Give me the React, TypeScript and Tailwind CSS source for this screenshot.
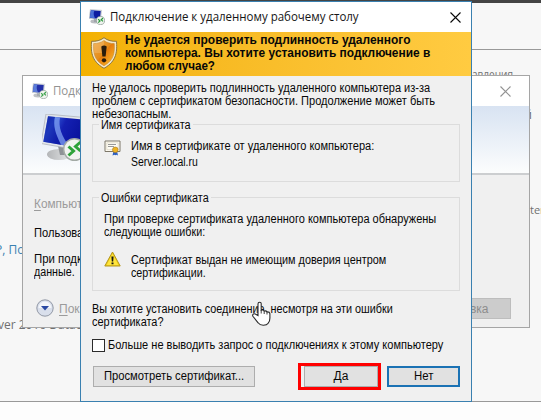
import { useLayoutEffect, useRef, useState } from "react";
import clsx from "clsx";

/** One line of text, condensed or widened so that it spans `width` pixels. */
function Line({ text, width, className }: { text: string; width: number; className?: string }) {
  const ref = useRef<HTMLSpanElement>(null);
  const [scale, setScale] = useState(1);
  useLayoutEffect(() => {
    const el = ref.current;
    if (el) setScale(width / el.offsetWidth);
  }, [text, width]);
  return (
    <div className={clsx("whitespace-nowrap", className)} style={{ width: `${width}px` }}>
      <span ref={ref} className="block w-max origin-left" style={{ transform: `scaleX(${scale})` }}>{text}</span>
    </div>
  );
}

function ComputerIcon({ className }: { className: string }) {
  return (
    <svg className={className} viewBox="0 0 16 16">
      <ellipse cx="6" cy="12.500" rx="4.600" ry="1.900" fill="#b9bcc0" />
      <path d="M5 10h4l1 3H5z" fill="#a0a5aa" />
      <path d="M1.300.5 12.600 1.200 11.600 10.900 0 9.400z" fill="#c9d0d8" stroke="#a5abb5" strokeWidth=".4" />
      <path d="M1.900 1.200 11.700 1.900l-.8 8L.8 8.700z" fill="#0d1ba0" />
      <path d="M1.900 1.200 5.500 1.500C4 4 4.800 6.500 6 9.200L.8 8.700z" fill="#4a6fd6" />
      <circle cx="11.500" cy="11.500" r="4.100" fill="#f0f3ef" stroke="#86978f" strokeWidth=".7" />
      <path d="m9.200 10.200 1.800 1.700-1.800 1.700M14 9l-1.800 1.700 1.800 1.700" fill="none" stroke="#2a9a3b" strokeWidth="1.200" />
    </svg>
  );
}

function LargeComputer() {
  return (
    <svg className="block h-[56px] w-[60px]" viewBox="0 0 60 56">
      <defs>
        <linearGradient id="screen" x1="0" y1="0" x2="1" y2=".35">
          <stop offset="0" stopColor="#1330b8" />
          <stop offset=".25" stopColor="#3157d6" />
          <stop offset=".5" stopColor="#1420b2" />
          <stop offset="1" stopColor="#08109a" />
        </linearGradient>
        <linearGradient id="stand" x1="0" y1="0" x2="1" y2="0">
          <stop offset="0" stopColor="#b4b6b8" />
          <stop offset="1" stopColor="#e4e6e7" />
        </linearGradient>
      </defs>
      <ellipse cx="17" cy="40.500" rx="12" ry="5.500" fill="url(#stand)" />
      <path d="M16 32h14l1 9H18z" fill="#8e9296" />
      <path d="M4 0 48 4 42 37 -1 29.500z" fill="#e2e6eb" stroke="#a9adb5" strokeWidth=".7" />
      <path d="M6 2.300 46 6 40.500 34.500 1.300 27.700z" fill="url(#screen)" />
      <path d="M6 2.300 13 3C11 11 13 19 19 30.800L1.300 27.700z" fill="#0c1da4" opacity=".55" />
      <path d="M13 3 18 3.400C16 13 20 22 27 32.200L19 30.800C13 19 11 11 13 3z" fill="#7fa0f0" opacity=".75" />
      <circle cx="32.500" cy="35.500" r="10.800" fill="#f1f3f0" stroke="#a3aaa5" strokeWidth="1.400" />
      <path d="m26.500 32.500 5 4.500-5 4.500M38.500 28l-5 4.500 5 4.500" fill="none" stroke="#2da339" strokeWidth="3" />
    </svg>
  );
}

function Shield() {
  return (
    <svg className="block h-[32px] w-[28px]" viewBox="0 0 28 32">
      <defs>
        <linearGradient id="shield" x1="0" y1="0" x2="1" y2="1">
          <stop offset="0" stopColor="#f0a94a" />
          <stop offset=".49" stopColor="#e58b16" />
          <stop offset=".5" stopColor="#e67b0d" />
          <stop offset="1" stopColor="#ffc52d" />
        </linearGradient>
      </defs>
      <path d="M14 .7C10.500 3.500 6 4.500 1.500 4.300 1 13 .5 24 14 31.300 27.500 24 27 13 26.500 4.300 22 4.500 17.500 3.500 14 .7z" fill="#f3e8ca" stroke="#8b7440" strokeWidth="1" />
      <path d="M14 3.500C11 5.700 7.500 6.600 3.700 6.600 3.300 15 3.500 23 14 28.800 24.500 23 24.700 15 24.300 6.600 20.500 6.600 17 5.700 14 3.500z" fill="url(#shield)" stroke="#bd7c1d" strokeWidth=".5" />
      <path d="M14 3.500C11 5.700 7.500 6.600 3.700 6.600L3.500 16H14z" fill="#f5c680" opacity=".35" />
      <path d="M11.300 9.500q2.700-2 5.400 0L15.600 19.500h-3.200z" fill="#291c0c" />
      <ellipse cx="14" cy="23.300" rx="2.200" ry="2.100" fill="#291c0c" />
    </svg>
  );
}

function Certificate() {
  return (
    <svg className="block h-[16px] w-[17px]" viewBox="0 0 17 16">
      <path d="M1 1h15v10.500H1z" fill="#fffdf4" stroke="#7d7769" />
      <path d="M2.800 2.800h11.400v6.900H2.800z" fill="none" stroke="#d3cbb9" strokeWidth=".6" />
      <path d="M4 4.500h8M4 6.500h6" stroke="#8d8d8d" strokeWidth=".9" />
      <path d="m9.500 11-1 4.500 2-.8 1 .5 1-.5 1.500.8-1-4.500z" fill="#2c5ec0" />
      <circle cx="11.300" cy="9.800" r="2.800" fill="#efb322" stroke="#a5791c" strokeWidth=".6" />
    </svg>
  );
}

function Warning() {
  return (
    <svg className="block h-[16px] w-[17px]" viewBox="0 0 17 16">
      <path d="M8.500 1 16.200 15H.8z" fill="#f2d01c" stroke="#b3951b" strokeWidth="1" strokeLinejoin="round" />
      <path d="M8.500 2.800 14.200 13.900H2.800z" fill="#ffe53c" />
      <path d="M7.400 5.500h2.200l-.4 5H7.800zM7.500 11.500h2v1.800h-2z" fill="#161616" />
    </svg>
  );
}

function Cross({ className }: { className: string }) {
  return (
    <svg className={className} viewBox="0 0 11 11">
      <path d="m.5.5 10 10M10.500.5l-10 10" stroke="currentColor" strokeWidth="1.100" />
    </svg>
  );
}

function BackWindow() {
  return (
    <div className="absolute left-[22px] top-[75px] flex h-[253px] w-[508px] flex-col border border-[#a5a5a5] bg-[#f0f0f0]">
      <div className="flex h-[30px] shrink-0 items-center justify-between bg-white pl-[9px] pr-[18px] text-[#929292]">
        <ComputerIcon className="block h-4 w-4 opacity-90" />
        <Line text="Подключение к удаленному рабочему столу" width={249} className="ml-[5px] flex-1 font-['Open_Sans',sans-serif] text-[12px]" />
        <Cross className="block h-[11px] w-[11px]" />
      </div>
      <div className="h-[69px] shrink-0 border-b-2 border-[#ccced0] bg-linear-to-b from-[#d8e3f2] to-[#fcfdfd] pl-[19px] pt-[8px]">
        <LargeComputer />
      </div>
      <div className="flex flex-1 flex-col pl-[11px]">
        <Line text="Компьютер:" width={64} className="mt-[23px] leading-[13px] text-[#9b9b9b] [&>span]:underline-offset-2 [&>span]:first-letter:underline" />
        <Line text="Пользователь:" width={75} className="mt-[16px] leading-[13px]" />
        <Line text="При подключении" width={94} className="mt-[13px] leading-[13px]" />
        <Line text="данные." width={41} className="leading-[13px]" />
        <div className="mt-[19px] flex h-[21px] items-center pl-[2px] pr-[18px]">
          <svg className="-mt-px block h-[18px] w-[18px]" viewBox="0 0 18 18">
            <circle cx="9" cy="9" r="8.200" fill="#d9dfeb" stroke="#9298a5" />
            <path d="M2.500 9a6.500 6.500 0 0 1 13 0" fill="#f3f5fa" />
            <path d="M5 7h8l-4 4.500z" fill="#2948a3" />
          </svg>
          <span className="ml-[5px] flex-1 text-[12px] text-[#9b9b9b]"><u className="underline-offset-2">П</u>оказать</span>
          <div className="flex h-[21px] w-[92px] items-center justify-center border border-[#bdbdbd] bg-[#cccccc] text-[12px] text-[#8c8c8c]">Справка</div>
        </div>
      </div>
    </div>
  );
}

function Dialog() {
  return (
    <div className="absolute left-[80px] top-[1px] flex h-[401px] w-[392px] flex-col border border-[#3a80b0] bg-[#f0f0f0]">
      <div className="flex h-[30px] shrink-0 items-center bg-white pl-[8px] pr-[10px]">
        <ComputerIcon className="block h-4 w-4 shrink-0" />
        <Line text="Подключение к удаленному рабочему столу" width={249} className="ml-[5px] flex-1 font-['Open_Sans',sans-serif] text-[12px] text-[#161616]" />
        <Cross className="block h-[11px] w-[11px]" />
      </div>
      <div className="flex h-[44px] shrink-0 bg-linear-to-r from-[#f3b100] to-[#ffcb41] pl-[9px] pt-[5px]">
        <Shield />
        <div className="-mt-[3px] ml-[7px] text-[12px] font-bold leading-[13px]">
          <Line text="Не удается проверить подлинность удаленного" width={285} />
          <Line text="компьютера. Вы хотите установить подключение в" width={305} />
          <Line text="любом случае?" width={90} />
        </div>
      </div>
      <div className="flex flex-1 flex-col px-[11px] pt-[6px] leading-[13px]">
        <Line text="Не удалось проверить подлинность удаленного компьютера из-за" width={338} />
        <Line text="проблем с сертификатом безопасности. Продолжение может быть" width={343} />
        <Line text="небезопасным." width={79} />
        <fieldset className="-mt-[4px] h-[65px] shrink-0 border border-[#dcdcdc] pl-[11px]">
          <legend className="-ml-[5px] px-[2px] pt-[2px]"><Line text="Имя сертификата" width={90} /></legend>
          <div className="flex gap-[10px] pt-[8px]">
            <Certificate />
            <div>
              <Line text="Имя в сертификате от удаленного компьютера:" width={243} />
              <Line text="Server.local.ru" width={67} className="mt-[3px]" />
            </div>
          </div>
        </fieldset>
        <fieldset className="mt-[8px] h-[101px] shrink-0 border border-[#dcdcdc] pl-[11px]">
          <legend className="-ml-[5px] px-[2px] pt-[2px]"><Line text="Ошибки сертификата" width={108} /></legend>
          <div className="pt-[8px]">
            <Line text="При проверке сертификата удаленного компьютера обнаружены" width={332} />
            <Line text="следующие ошибки:" width={101} />
          </div>
          <div className="mt-[12px] flex gap-[10px]">
            <Warning />
            <div className="pt-[3px]">
              <Line text="Сертификат выдан не имеющим доверия центром" width={255} />
              <Line text="сертификации." width={75} />
            </div>
          </div>
        </fieldset>
        <Line text="Вы хотите установить соединение, несмотря на эти ошибки" width={301} className="mt-[12px]" />
        <Line text="сертификата?" width={72} />
        <div className="mt-[10px] flex h-[13px] gap-[3px]">
          <div className="h-[13px] w-[13px] border border-[#2b2b2b] bg-white" />
          <Line text="Больше не выводить запрос о подключениях к этому компьютеру" width={335} />
        </div>
        <div className="mt-[11px] flex h-[27px] items-center pl-px">
          <div className="flex h-[21px] w-[162px] items-center justify-center border border-[#adadad] bg-[#e1e1e1]"><Line text="Просмотреть сертификат..." width={140} /></div>
          <div className="ml-[43px] h-[27px] w-[83px] border-3 border-[#ff0000] pl-[3px]">
            <div className="flex h-[21px] w-[74px] items-center justify-center border border-[#adadad] bg-[#e1e1e1]"><Line text="Да" width={15} /></div>
          </div>
          <div className="ml-[6px] flex h-[21px] w-[73px] items-center justify-center border-2 border-[#1b72b4] bg-[#e1e1e1]"><Line text="Нет" width={19} /></div>
        </div>
      </div>
    </div>
  );
}

export default function App() {
  return (
    <div className="relative h-[420px] w-[541px] overflow-hidden bg-[#fdfdfd] font-['Liberation_Sans',Arial,sans-serif] text-[12px] text-[#080808]">
      <div className="h-[3px] bg-[#444444]" />
      <div className="h-[47px] border-b border-[#999999] bg-[#f7f7f7]" />
      <div className="h-[352px] border-b border-[#999999] bg-[#f7f7f7]" />
      <Line text="авления" width={41} className="absolute left-[472px] top-[67px] font-['Open_Sans',sans-serif] text-[12px] leading-[16px] text-[#707070]" />
      <span className="absolute left-[525px] top-[107px] text-[12px] leading-[16px] text-[#707070]">й</span>
      <span className="absolute left-0 top-[241px] -ml-[5px] whitespace-nowrap font-['Open_Sans',sans-serif] text-[12px] leading-[17px] text-[#3a81b1]">Р, Под</span>
      <span className="absolute left-0 top-[317px] -ml-[2px] whitespace-nowrap font-['Open_Sans',sans-serif] text-[12px] leading-[16px] text-[#707070]">ver 2016 Datacenter</span>
      <BackWindow />
      <span className="absolute left-[530px] top-[202px] font-['Open_Sans',sans-serif] text-[11px] leading-[16px] text-[#707070]">ter</span>
      <Dialog />
      <svg className="absolute left-[251px] top-[301px] h-[26px] w-[20px]" viewBox="0 0 20 26">
        <path d="M7 14.500V3q0-1.700 1.600-1.700T10.200 3v6.200q2.300-.6 3 .8 2.100-.5 2.800.9 2.600-.2 2.900 1.800v4.300q0 3.300-1.700 5.200-1.300 2-4.900 2-3.500 0-5.200-2.400L1.900 15.300q-.8-1.800.7-2.400 1.300-.4 2.600.7z" fill="#fff" stroke="#2b2b2b" strokeWidth="1.100" />
        <path d="M10.200 9v3.500M13.200 10v3M16 11v2.500" stroke="#2b2b2b" strokeWidth=".9" />
      </svg>
    </div>
  );
}
